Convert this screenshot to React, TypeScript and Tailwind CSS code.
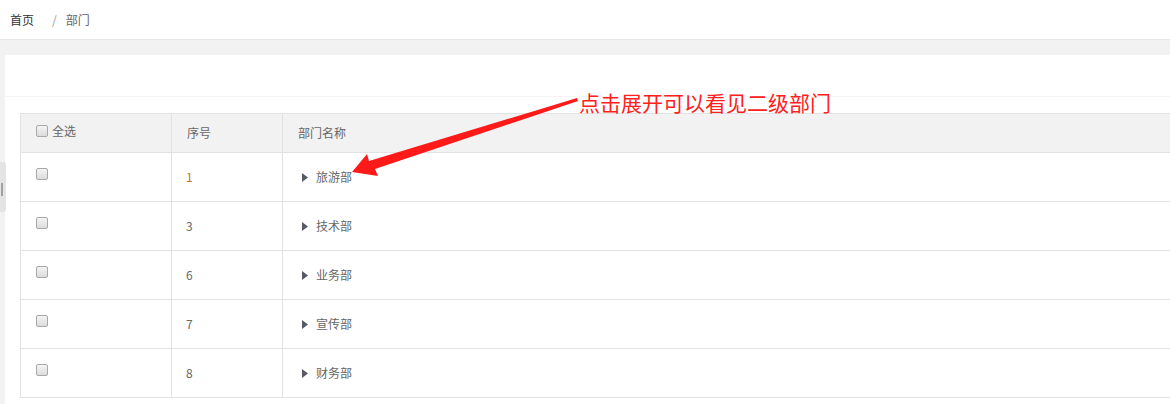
import React from "react";

const rows = [
  { id: "1", name: "旅游部", hl: true },
  { id: "3", name: "技术部" },
  { id: "6", name: "业务部" },
  { id: "7", name: "宣传部" },
  { id: "8", name: "财务部" },
];

function Box() {
  return (
    <span className="inline-block w-[12px] h-[12px] rounded-[2px] border border-[#a9a9a9] bg-gradient-to-b from-[#f4f4f4] to-[#dcdcdc] align-middle" />
  );
}

export default function App() {
  return (
    <div
      className="relative w-[1170px] h-[404px] overflow-hidden bg-[#f2f2f2] text-[12px] text-[#666]"
      style={{ fontFamily: '"Noto Sans CJK SC", "Noto Sans", sans-serif' }}
    >
      <div className="h-[40px] bg-white border-b border-[#e6e6e6] flex items-center pl-[10px] text-[12px]">
        <span className="text-[#333]">首页</span>
        <span className="text-[#999] ml-[18px]">/</span>
        <span className="text-[#666] ml-[9px]">部门</span>
      </div>
      <div className="mt-[15px] ml-[5px] w-[1300px] bg-white">
        <div className="h-[42px] border-b border-[#f4f4f4]" />
        <div className="px-[15px] pt-[16px] pb-[10px]">
          <table className="w-full border-collapse border border-[#e2e2e2]">
            <colgroup>
              <col className="w-[151px]" />
              <col className="w-[111px]" />
              <col />
            </colgroup>
            <thead>
              <tr className="bg-[#f2f2f2] h-[39px]">
                <th className="border border-[#e2e2e2] text-left font-normal pl-[15px]">
                  <span className="flex items-center gap-[4px] -mt-[4px]">
                    <Box />
                    <span>全选</span>
                  </span>
                </th>
                <th className="border border-[#e2e2e2] text-left font-normal pl-[15px]">序号</th>
                <th className="border border-[#e2e2e2] text-left font-normal pl-[15px]">部门名称</th>
              </tr>
            </thead>
            <tbody>
              {rows.map((r) => (
                <tr key={r.id} className="h-[49px]">
                  <td className="border border-[#e2e2e2] pl-[15px]">
                    <span className="flex -mt-[6px]">
                      <Box />
                    </span>
                  </td>
                  <td className={"border border-[#e2e2e2] pl-[14px] " + (r.hl ? "text-[#c2701f]" : "text-[#666]")}>
                    {r.id}
                  </td>
                  <td className="border border-[#e2e2e2] pl-[19px]">
                    <span className="flex items-center">
                      <svg width="6" height="9" viewBox="0 0 6 9" className="mr-[8px]">
                        <polygon points="0,0 6,4.5 0,9" fill="#555a66" />
                      </svg>
                      <span>{r.name}</span>
                    </span>
                  </td>
                </tr>
              ))}
            </tbody>
          </table>
        </div>
      </div>

      <div className="absolute left-0 top-[162px] w-[6px] h-[50px] bg-[#e4e4e4] rounded-r-[3px]">
        <div className="absolute left-[1px] top-[21px] w-[2px] h-[13px] bg-[#a0a0a0]" />
      </div>

      <svg className="absolute left-0 top-0 pointer-events-none" width="1170" height="404">
        <polygon
          points="352,172 367,154 369,161 577,98 578,101 375,169 378,176"
          fill="#ff1a1a"
        />
      </svg>
      <div className="absolute left-[579px] top-[88px] text-[21px] leading-[28px] text-[#ff2020]">
        点击展开可以看见二级部门
      </div>
    </div>
  );
}
